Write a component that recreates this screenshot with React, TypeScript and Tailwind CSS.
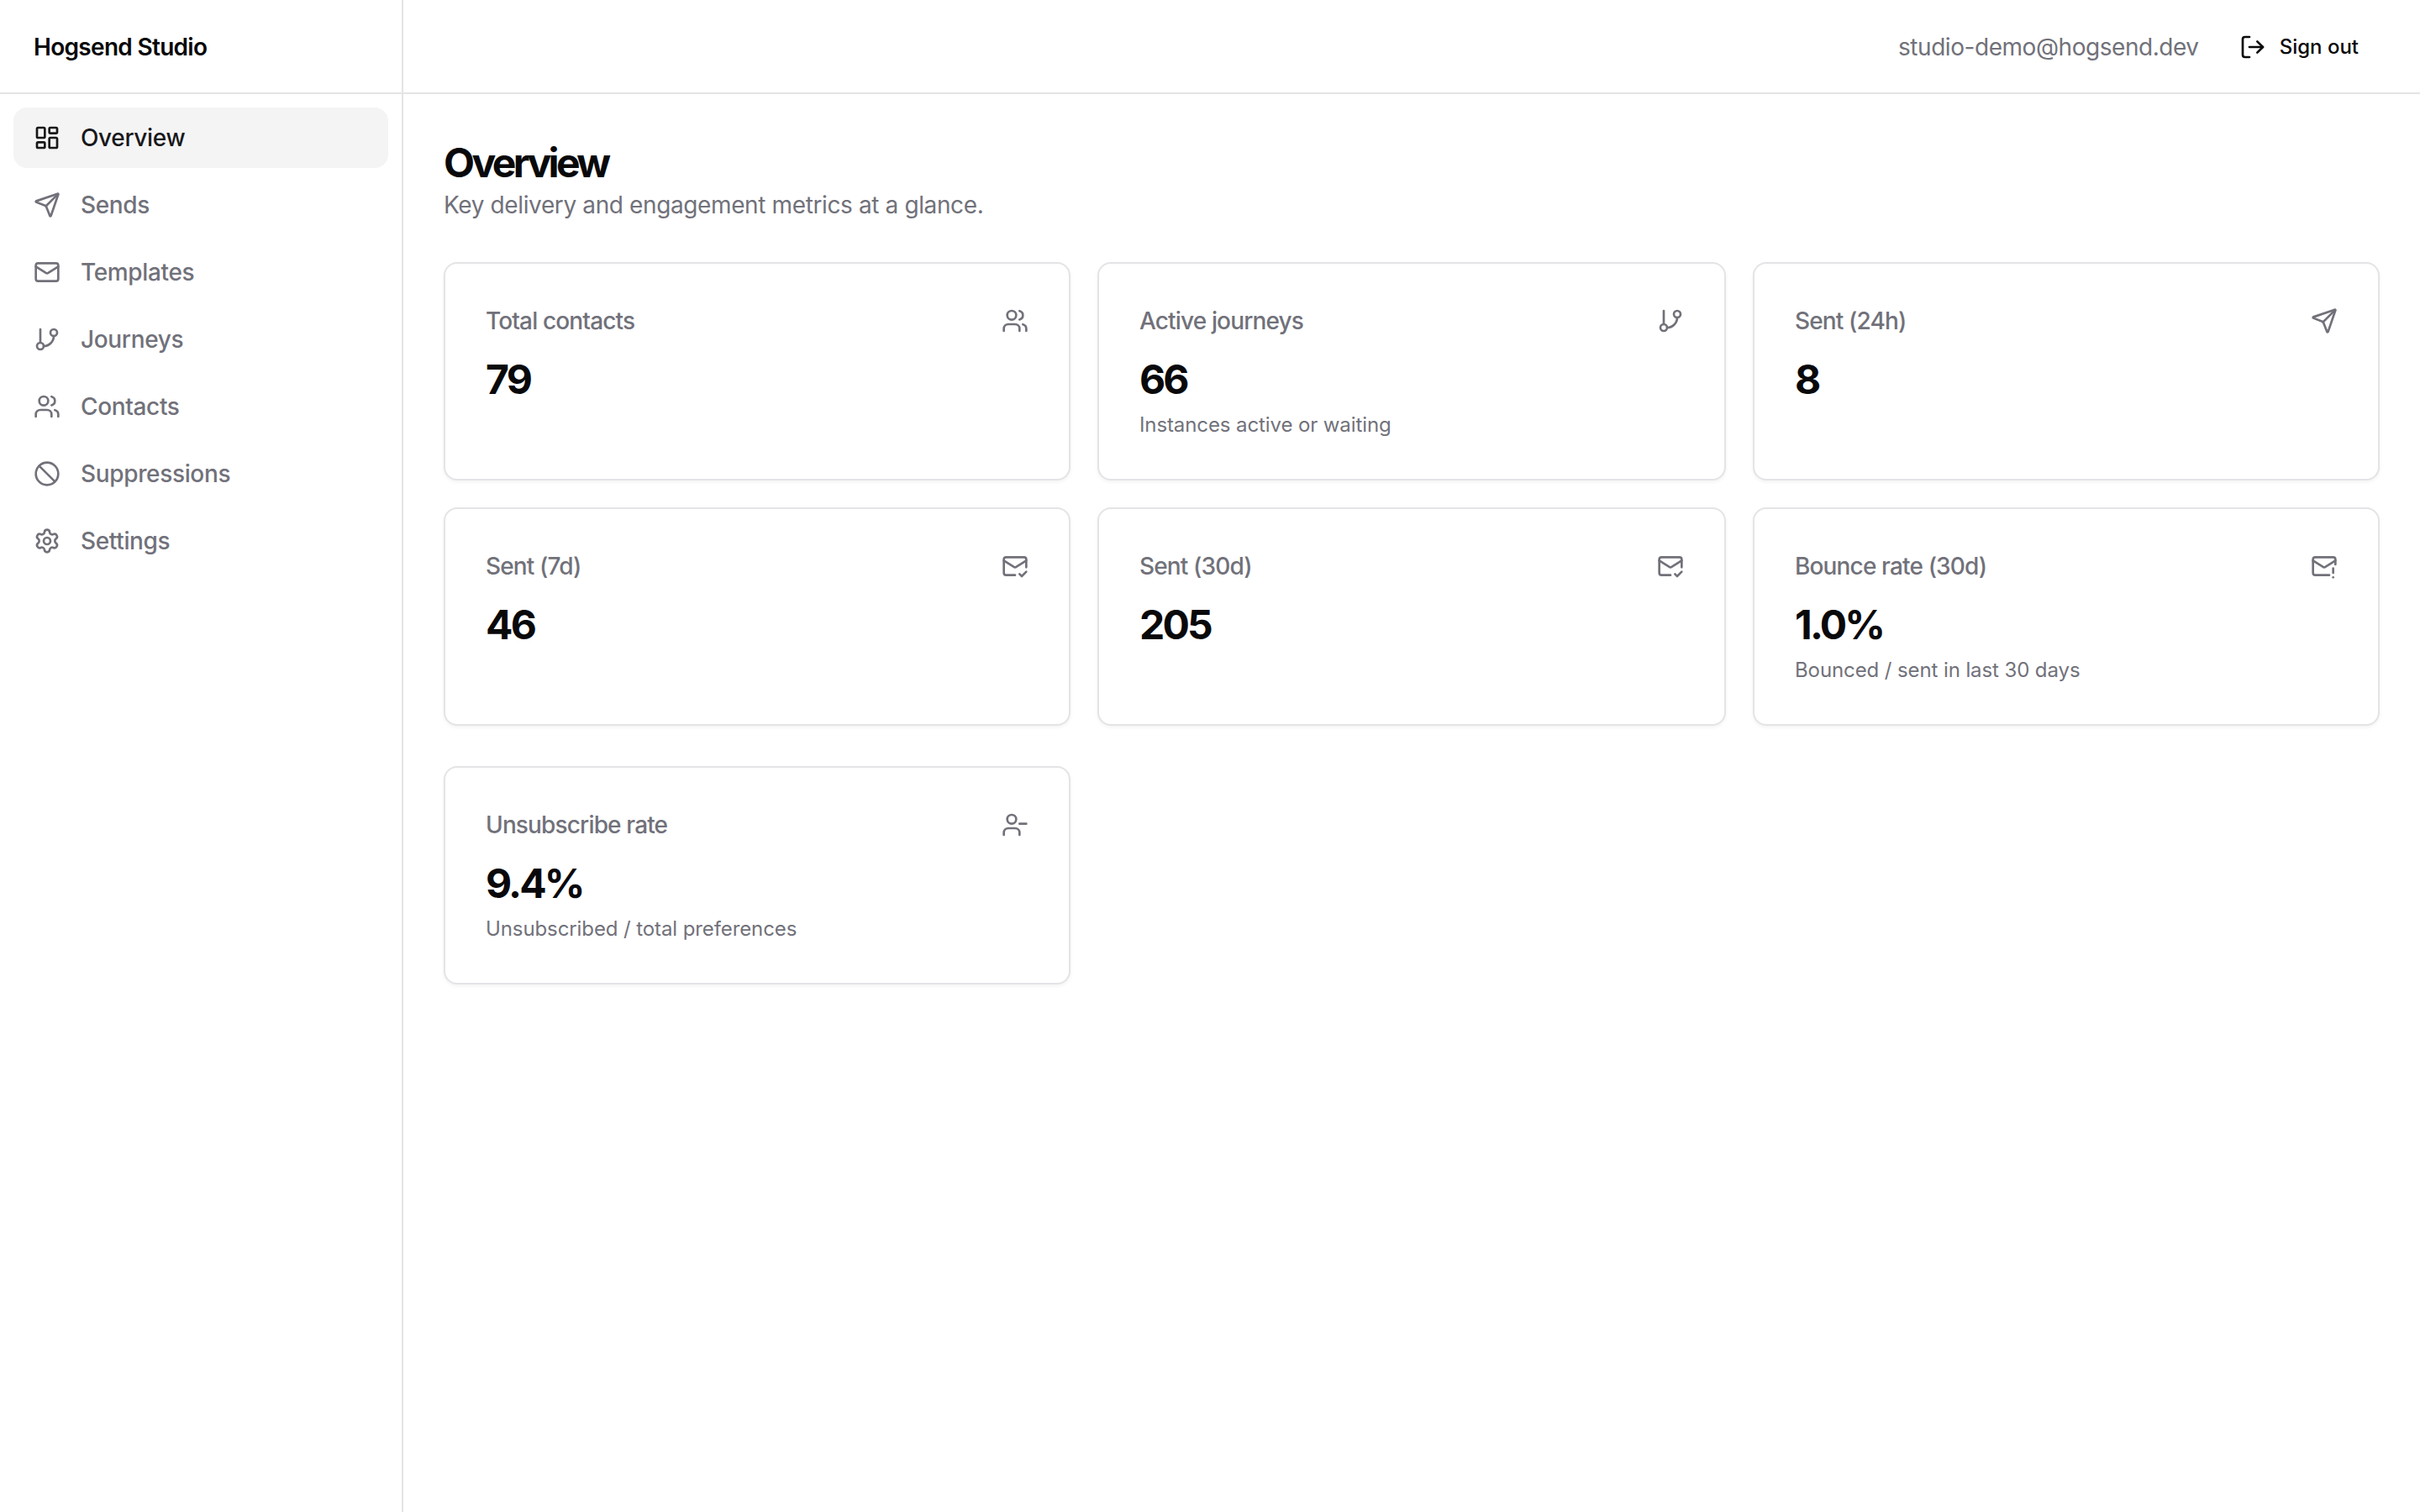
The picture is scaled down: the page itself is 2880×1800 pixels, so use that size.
import React from 'react';
import {
  Ban,
  GitBranch,
  LayoutDashboard,
  LogOut,
  Mail,
  MailCheck,
  MailWarning,
  Send,
  Settings,
  UserMinus,
  Users,
} from 'lucide-react';

const navItems = [
  { label: 'Overview', icon: LayoutDashboard, active: true },
  { label: 'Sends', icon: Send },
  { label: 'Templates', icon: Mail },
  { label: 'Journeys', icon: GitBranch },
  { label: 'Contacts', icon: Users },
  { label: 'Suppressions', icon: Ban },
  { label: 'Settings', icon: Settings },
];

const topCards = [
  { label: 'Total contacts', value: '79', icon: Users },
  { label: 'Active journeys', value: '66', note: 'Instances active or waiting', icon: GitBranch },
  { label: 'Sent (24h)', value: '8', icon: Send },
  { label: 'Sent (7d)', value: '46', icon: MailCheck },
  { label: 'Sent (30d)', value: '205', icon: MailCheck },
  { label: 'Bounce rate (30d)', value: '1.0%', note: 'Bounced / sent in last 30 days', icon: MailWarning },
];

const bottomCards = [
  { label: 'Unsubscribe rate', value: '9.4%', note: 'Unsubscribed / total preferences', icon: UserMinus },
];

interface StatCardProps {
  label: string;
  value: string;
  note?: string;
  icon: React.ElementType;
}

const StatCard: React.FC<StatCardProps> = ({ label, value, note, icon: Icon }) => (
  <div className="rounded-[16px] border-2 border-[#e4e4e7] bg-white p-[48px] shadow-[0_2px_4px_rgba(0,0,0,0.05)]">
    <div className="flex items-center justify-between pb-[16px]">
      <span className="text-[28px] leading-[40px] font-medium tracking-[-0.85px] text-[#71717a]">{label}</span>
      <Icon className="h-[32px] w-[32px] text-[#71717a]" strokeWidth={2} />
    </div>
    <div className="-mb-[4px] text-[48px] leading-[68px] font-bold tracking-[-2.8px] text-[#09090b]">{value}</div>
    {note && <p className="mt-[8px] text-[24px] leading-[32px] tracking-[-0.1px] text-[#71717a]">{note}</p>}
  </div>
);

export default function App() {
  return (
    <div className="flex min-h-screen bg-white font-['Inter',sans-serif]">
      <aside className="w-[480px] shrink-0 border-r-2 border-[#e4e4e7]">
        <div className="flex h-[112px] items-center border-b-2 border-[#e4e4e7] px-[40px] pt-[2px]">
          <span className="text-[28px] leading-[40px] font-semibold tracking-[-0.7px] text-[#09090b]">Hogsend Studio</span>
        </div>
        <nav className="flex flex-col gap-[8px] p-[16px]">
          {navItems.map(({ label, icon: Icon, active }) => (
            <a
              key={label}
              className={`flex items-center gap-[24px] rounded-[16px] px-[24px] py-[16px] text-[28px] leading-[40px] font-medium tracking-[-0.35px] ${
                active ? 'bg-[#f4f4f5] text-[#18181b]' : 'text-[#71717a]'
              }`}
            >
              <Icon className="h-[32px] w-[32px]" strokeWidth={2} />
              {label}
            </a>
          ))}
        </nav>
      </aside>

      <div className="min-w-0 flex-1">
        <header className="flex h-[112px] items-center justify-end gap-[24px] border-b-2 border-[#e4e4e7] pr-[49px] pl-[48px] pt-[2px]">
          <span className="text-[28px] leading-[40px] tracking-[-0.45px] text-[#71717a]">studio-demo@hogsend.dev</span>
          <button className="flex items-center gap-[16px] px-[24px] text-[24px] leading-[32px] font-medium text-[#09090b]">
            <LogOut className="h-[32px] w-[32px]" strokeWidth={2} />
            Sign out
          </button>
        </header>

        <main className="p-[48px]">
          <h1 className="-mb-[4px] text-[48px] leading-[68px] font-bold tracking-[-3.6px] text-[#09090b]">Overview</h1>
          <p className="mb-[48px] text-[28px] leading-[40px] tracking-[-0.38px] text-[#71717a]">
            Key delivery and engagement metrics at a glance.
          </p>
          <div className="grid grid-cols-[746px_748px_746px] gap-[32px]">
            {topCards.map((card) => (
              <StatCard key={card.label} {...card} />
            ))}
          </div>
          <div className="mt-[48px] grid grid-cols-[746px_748px_746px] gap-[32px]">
            {bottomCards.map((card) => (
              <StatCard key={card.label} {...card} />
            ))}
          </div>
        </main>
      </div>
    </div>
  );
}
